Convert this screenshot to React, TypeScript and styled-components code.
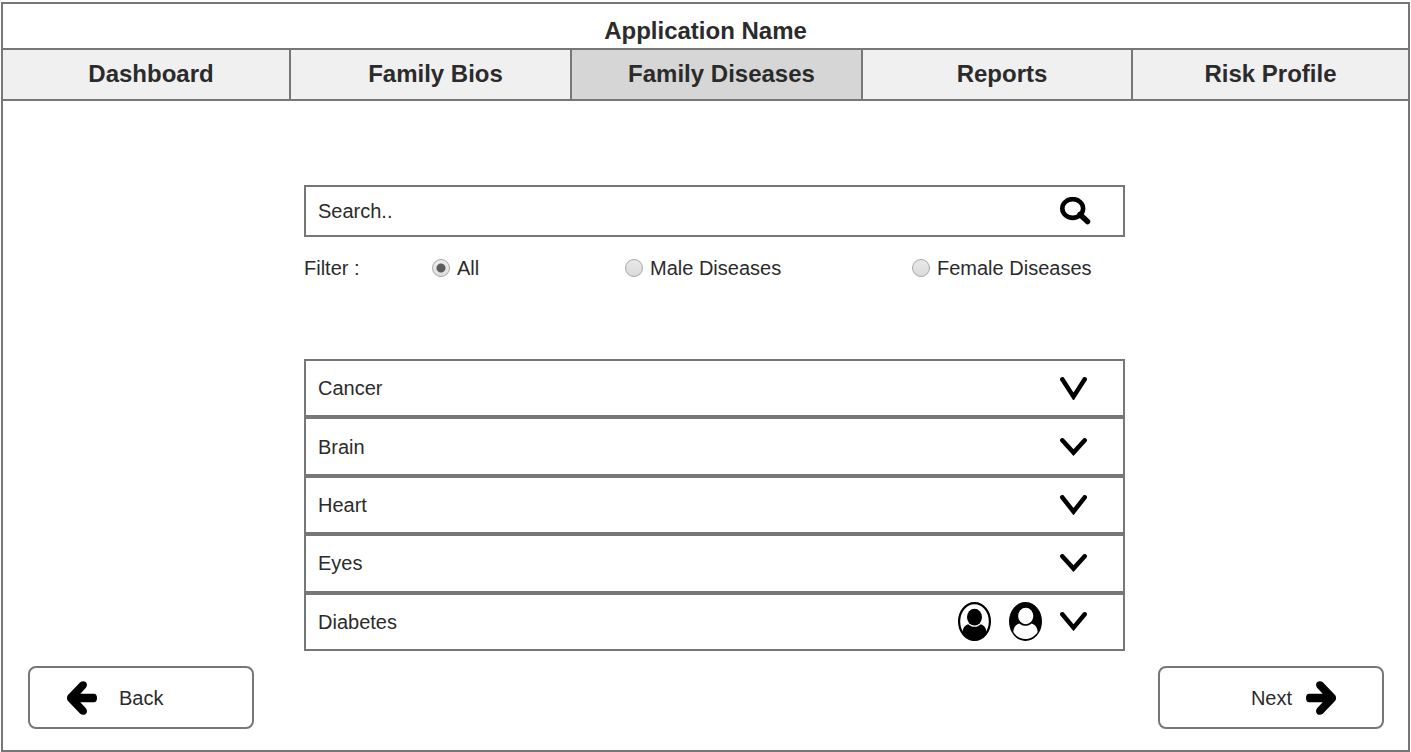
import React, { useState } from "react";
import styled, { createGlobalStyle } from "styled-components";

const line = "#757877";
const ink = "#2b2b2b";

const GlobalStyle = createGlobalStyle`
  *, *::before, *::after { box-sizing: border-box; }
  body {
    margin: 0;
    background: #fff;
    color: ${ink};
    font-family: "Liberation Sans", Arial, sans-serif;
    font-size: 20px;
    line-height: 24px;
  }
  button, input {
    font: inherit;
    color: inherit;
  }
  button { cursor: pointer; }
`;

const Page = styled.div`
  display: flex;
  flex-direction: column;
  min-height: 100vh;
  padding: 2px 1px 0;
`;

const Frame = styled.div`
  display: flex;
  flex: 1;
  flex-direction: column;
  border: 2px solid ${line};
`;

const Header = styled.header`
  padding: 13px 0 3px;
  border-bottom: 2px solid ${line};
`;

const Title = styled.h1`
  margin: 0;
  font-size: 24px;
  line-height: 28px;
  text-align: center;
`;

const Nav = styled.nav`
  display: grid;
  grid-template-columns: 288fr 281fr 291fr 270fr 275fr;
  border-bottom: 2px solid ${line};
`;

const Tab = styled.a<{ $active: boolean }>`
  padding: 10px 0 11px 10px;
  border-right: 2px solid ${line};
  background: ${(p) => (p.$active ? "#d6d6d6" : "#f0f0f0")};
  color: ${ink};
  font-size: 24px;
  font-weight: bold;
  line-height: 28px;
  text-align: center;
  text-decoration: none;

  &:last-child {
    padding-left: 0;
    border-right: 0;
  }
`;

const Content = styled.main`
  display: grid;
  grid-template-columns: 301fr minmax(0, 821fr) 283fr;
  padding-top: 84px;
`;

const Panel = styled.div`
  grid-column: 2;
`;

const SearchBox = styled.form`
  display: flex;
  align-items: center;
  height: 52px;
  padding-right: 32px;
  border: 2px solid ${line};
`;

const SearchInput = styled.input`
  flex: 1;
  min-width: 0;
  height: 100%;
  padding: 0 12px;
  border: 0;
  outline: 0;
  background: transparent;

  &::placeholder {
    color: ${ink};
    opacity: 1;
  }
`;

const SearchButton = styled.button`
  display: flex;
  padding: 0;
  border: 0;
  background: none;
`;

const Filters = styled.div`
  display: grid;
  grid-template-columns: 128fr 193fr 287fr 213fr;
  align-items: center;
  margin: 19px 0 79px;
`;

const FilterOption = styled.label`
  display: flex;
  align-items: center;
  gap: 7px;
  white-space: nowrap;
`;

const Radio = styled.input`
  appearance: none;
  flex: none;
  width: 18px;
  height: 18px;
  margin: 0;
  border: 1px solid #a8a8a8;
  border-radius: 50%;
  background: linear-gradient(#e9e9e9, #dadada);

  &:checked {
    background: radial-gradient(circle, #5c5c5c 4px, transparent 5px),
      linear-gradient(#ededed, #dedede);
  }
`;

const DiseaseList = styled.ul`
  display: grid;
  grid-auto-rows: 1fr;
  min-height: 292px;
  margin: 0;
  padding: 0;
  list-style: none;
`;

const DiseaseRow = styled.button`
  display: flex;
  align-items: center;
  gap: 18px;
  width: 100%;
  height: 100%;
  padding: 0 36px 0 12px;
  border: 2px solid ${line};
  background: #fff;
  text-align: left;
`;

const DiseaseName = styled.span`
  flex: 1;
`;

const Footer = styled.footer`
  display: flex;
  justify-content: space-between;
  margin-top: auto;
  padding: 15px 24px 21px 25px;
`;

const StepButton = styled.button<{ $end?: boolean }>`
  display: flex;
  align-items: center;
  justify-content: ${(p) => (p.$end ? "flex-end" : "flex-start")};
  gap: ${(p) => (p.$end ? "14px" : "22px")};
  width: 226px;
  height: 63px;
  padding: ${(p) => (p.$end ? "0 46px 0 0" : "0 0 0 37px")};
  border: 2px solid ${line};
  border-radius: 8px;
  background: #fff;
`;

const SearchIcon = () => (
  <svg width="31" height="28" viewBox="0 0 31 28" fill="none" stroke="#000" aria-hidden="true">
    <ellipse cx="12.7" cy="11.5" rx="10.4" ry="9.4" strokeWidth="4.6" />
    <path d="M20 17.500 27.500 24.500" strokeWidth="5.5" strokeLinecap="round" />
  </svg>
);

const Chevron = ({ height }: { height: number }) => (
  <svg width="27" height={height} viewBox={`0 0 27 ${height}`} aria-hidden="true">
    <path
      d={`M2.300 2.300 13.500 ${height - 3.4} 24.700 2.300`}
      fill="none"
      stroke="#000"
      strokeWidth="4.5"
      strokeLinecap="round"
    />
  </svg>
);

const MaleAvatar = () => (
  <svg width="33" height="39" viewBox="0 0 33 39" role="img" aria-label="Male">
    <ellipse cx="16.5" cy="19.5" rx="15.4" ry="18.4" fill="#fff" stroke="#000" strokeWidth="2.2" />
    <path
      d="M4.500 31C4.800 26 6.500 23.300 10.200 22.200C13.800 25.600 19.200 25.600 22.800 22.200C26.500 23.300 28.200 26 28.500 31C25.500 36 21.500 38.400 16.500 38.400C11.500 38.400 7.500 36 4.500 31Z"
      fill="#000"
    />
    <ellipse cx="16.500" cy="15.200" rx="7.500" ry="8.400" fill="#000" />
  </svg>
);

const FemaleAvatar = () => (
  <svg width="33" height="39" viewBox="0 0 33 39" role="img" aria-label="Female">
    <ellipse cx="16.5" cy="19.5" rx="16.500" ry="19.500" fill="#000" />
    <path
      d="M4.300 30C4.600 25.500 6.500 22.500 10.300 21.400C14 24.500 19 24.500 22.700 21.400C26.500 22.500 28.400 25.500 28.700 30C25.500 34.800 21.500 37 16.500 37C11.500 37 7.500 34.800 4.300 30Z"
      fill="#fff"
    />
    <ellipse cx="16.700" cy="14" rx="7.600" ry="8.300" fill="#fff" />
  </svg>
);

const Arrow = ({ flip }: { flip?: boolean }) => (
  <svg width="30" height="34" viewBox="0 0 30 34" aria-hidden="true">
    <path
      transform={flip ? "matrix(-1 0 0 1 30 0)" : undefined}
      d="M13.200 1.200C15.500-0.600 18.500 0 19.500 2C20.300 3.800 20 5.400 18.700 6.900L13.300 12.800H27C29 12.800 30 14.500 30 17C30 19.500 29 21.200 27 21.200H13.300L18.700 27.100C20 28.600 20.300 30.200 19.500 32C18.500 34 15.500 34.600 13.200 32.800L1 20C-0.400 18.200-0.400 15.800 1 14Z"
      fill="#000"
    />
  </svg>
);

const tabs = ["Dashboard", "Family Bios", "Family Diseases", "Reports", "Risk Profile"];
const filters = ["All", "Male Diseases", "Female Diseases"];
const diseases = [
  { name: "Cancer", chevron: 23 },
  { name: "Brain", chevron: 18 },
  { name: "Heart", chevron: 20 },
  { name: "Eyes", chevron: 18 },
  { name: "Diabetes", chevron: 19, affected: true },
];

export default function App() {
  const [filter, setFilter] = useState("All");

  return (
    <Page>
      <GlobalStyle />
      <Frame>
        <Header>
          <Title>Application Name</Title>
        </Header>
        <Nav>
          {tabs.map((tab) => (
            <Tab
              key={tab}
              href="#"
              $active={tab === "Family Diseases"}
              aria-current={tab === "Family Diseases" ? "page" : undefined}
            >
              {tab}
            </Tab>
          ))}
        </Nav>
        <Content>
          <Panel>
            <SearchBox role="search" onSubmit={(e) => e.preventDefault()}>
              <SearchInput type="text" placeholder="Search.." aria-label="Search diseases" />
              <SearchButton type="submit" aria-label="Search">
                <SearchIcon />
              </SearchButton>
            </SearchBox>
            <Filters role="radiogroup" aria-labelledby="filter-label">
              <span id="filter-label">Filter :</span>
              {filters.map((name) => (
                <FilterOption key={name}>
                  <Radio
                    type="radio"
                    name="filter"
                    checked={filter === name}
                    onChange={() => setFilter(name)}
                  />
                  {name}
                </FilterOption>
              ))}
            </Filters>
            <DiseaseList>
              {diseases.map((d) => (
                <li key={d.name}>
                  <DiseaseRow type="button" aria-expanded={false}>
                    <DiseaseName>{d.name}</DiseaseName>
                    {d.affected && (
                      <>
                        <MaleAvatar />
                        <FemaleAvatar />
                      </>
                    )}
                    <Chevron height={d.chevron} />
                  </DiseaseRow>
                </li>
              ))}
            </DiseaseList>
          </Panel>
        </Content>
        <Footer>
          <StepButton type="button">
            <Arrow />
            Back
          </StepButton>
          <StepButton type="button" $end>
            Next
            <Arrow flip />
          </StepButton>
        </Footer>
      </Frame>
    </Page>
  );
}
